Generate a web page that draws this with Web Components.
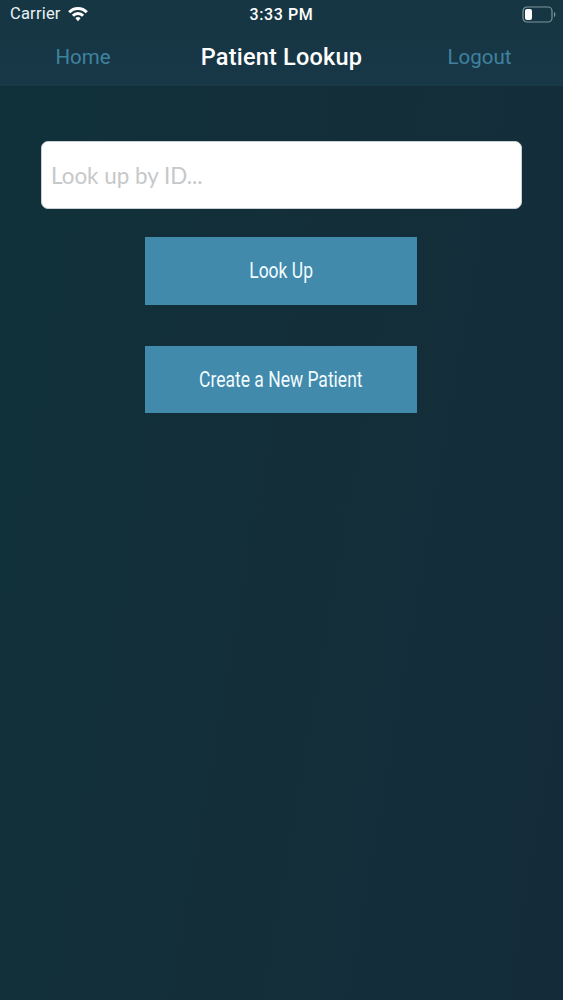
<!DOCTYPE html>
<html><head><meta charset="utf-8">
<style>
html,body{margin:0;padding:0;height:100%}
body{width:563px;height:1000px;overflow:hidden;background:linear-gradient(100deg,#10313a 0%,#132e39 50%,#142c3a 100%);font-family:Roboto,"Liberation Sans",sans-serif}
</style></head><body>
<app-screen>
  <status-bar></status-bar>
  <nav-bar title="Patient Lookup" left="Home" right="Logout"></nav-bar>
  <main-panel>
    <search-field placeholder="Look up by ID..."></search-field>
    <action-button style="margin-top:28px">Look Up</action-button>
    <action-button style="margin-top:41px">Create a New Patient</action-button>
  </main-panel>
</app-screen>
<script>
class Base extends HTMLElement{
  render(html){this.attachShadow({mode:'open'}).innerHTML=html;}
}
customElements.define('app-screen',class extends Base{connectedCallback(){this.render(`<style>:host{display:flex;flex-direction:column;height:1000px}</style><slot></slot>`)}});
customElements.define('status-bar',class extends Base{connectedCallback(){this.render(`<style>
:host{display:grid;grid-template-columns:1fr auto 1fr;align-items:center;height:29px;padding:0 6px 0 10px;color:#fff;font:500 16px/1 Roboto,sans-serif;background:#173644;box-sizing:border-box}
.l{display:flex;align-items:center;gap:7px;font-weight:400;color:#e8f2f5;font-size:16.500px;letter-spacing:.2px;font-family:Roboto,sans-serif}
.t{letter-spacing:.6px;margin-left:-4px}
.r{display:flex;justify-content:flex-end;padding-right:1px}
svg{display:block}
</style>
<div class="l"><span>Carrier</span><svg style="margin-top:-2px" width="20" height="16" viewBox="0 0 20 16"><g fill="none" stroke="#fff" stroke-width="3"><path d="M1.200 6.300A12 12 0 0 1 18.800 6.300"/><path d="M4.900 9.700A7 7 0 0 1 15.100 9.700"/></g><path d="M10 15.300L7.400 12.200A3.500 3.500 0 0 1 12.600 12.200Z" fill="#fff"/></svg></div>
<div class="t">3:33 PM</div>
<div class="r"><svg width="34" height="17" viewBox="0 0 34 17"><rect x="1" y="1" width="29" height="15" rx="4" fill="none" stroke="#7d959e" stroke-width="1.200"/><rect x="3" y="3" width="7" height="11" rx="2" fill="#fff"/><path d="M32 6v5c.9-.3 1.400-1.300 1.400-2.500S32.900 6.300 32 6z" fill="#7d959e"/></svg></div>`)}});
customElements.define('nav-bar',class extends Base{connectedCallback(){const a=n=>this.getAttribute(n);this.render(`<style>
:host{display:grid;grid-template-columns:166px 1fr 166px;align-items:center;height:57px;background:linear-gradient(180deg,#173644,#183747);border-bottom:1px solid #1a3a47;box-sizing:border-box;font-family:Roboto,sans-serif;padding-bottom:1px}
.s{font-size:20.500px;color:#3f829f;text-align:center}
.t{font-size:23.500px;font-weight:500;color:#fff;text-align:center;letter-spacing:.2px;white-space:nowrap}
</style><div class="s">${a('left')}</div><div class="t">${a('title')}</div><div class="s" style="margin-left:-1px">${a('right')}</div>`)}});
customElements.define('main-panel',class extends Base{connectedCallback(){this.render(`<style>:host{display:flex;flex-direction:column;align-items:center;padding-top:55px}</style><slot></slot>`)}});
customElements.define('search-field',class extends Base{connectedCallback(){this.render(`<style>
:host{display:flex;align-items:center;width:481px;height:68px;box-sizing:border-box;background:#fff;border-radius:7px;border:1px solid #c9d0d3;padding:2px 10px 0 9px;color:#c6c8ca;font:400 22.400px/1 Lato,"Noto Sans",sans-serif}
</style><span>${this.getAttribute('placeholder')}</span>`)}});
customElements.define('action-button',class extends Base{connectedCallback(){this.render(`<style>
:host{display:flex;align-items:center;justify-content:center;width:272px;height:67.500px;box-sizing:border-box;padding-top:1px;margin-right:1px;background:#418aab;color:#f2fbff;font:400 22px/1 Roboto,sans-serif}
span{display:inline-block;white-space:nowrap;transform:scaleX(.795)}
</style><span><slot></slot></span>`)}});
</script>
</body></html>
